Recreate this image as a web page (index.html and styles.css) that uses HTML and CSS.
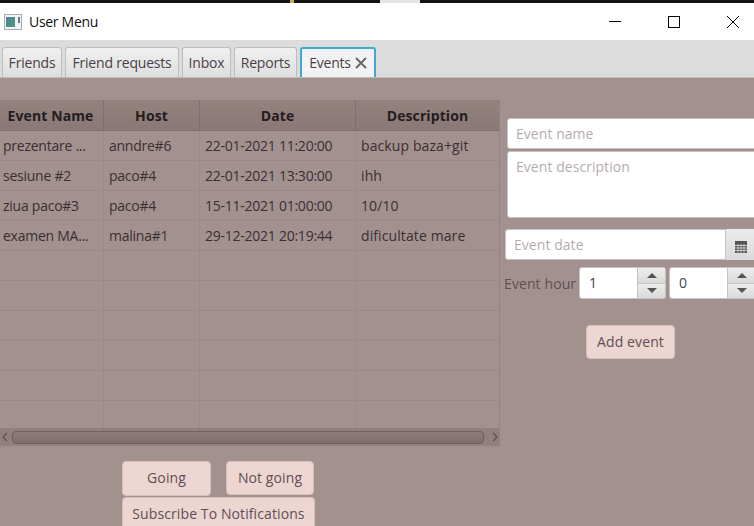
FILE: index.html
```html
<!DOCTYPE html>
<html lang="en">
<head>
    <meta charset="UTF-8">
    <title>User Menu</title>
    <link rel="stylesheet" href="styles.css">
</head>
<body>
    <div class="desktop-strip">
        <span class="strip-gold"></span>
        <span class="strip-light"></span>
    </div>
    <div class="window">
        <div class="titlebar">
            <svg class="app-icon" width="18" height="16" viewBox="0 0 18 16">
                <defs>
                    <linearGradient id="appFill" x1="0" y1="0" x2="1" y2="1">
                        <stop offset="0" stop-color="#4d7fa8"/>
                        <stop offset="1" stop-color="#4f9a6e"/>
                    </linearGradient>
                </defs>
                <rect x="0.5" y="0.5" width="17" height="15" fill="#f2f4f4" stroke="#a9adb0"/>
                <rect x="2" y="3" width="9" height="10" fill="url(#appFill)"/>
                <rect x="14" y="3" width="2" height="6" fill="#5f7f92"/>
            </svg>
            <span class="title">User Menu</span>
            <div class="win-buttons">
                <svg width="14" height="14" viewBox="0 0 14 14"><path d="M1 6.5H13" stroke="#000" fill="none"/></svg>
                <svg width="14" height="14" viewBox="0 0 14 14"><rect x="1.5" y="1.5" width="11" height="11" stroke="#000" fill="none"/></svg>
                <svg width="14" height="14" viewBox="0 0 14 14"><path d="M1 1L13 13M13 1L1 13" stroke="#000" fill="none"/></svg>
            </div>
        </div>

        <div class="tabbar">
            <div class="tab tab-friends">Friends</div>
            <div class="tab tab-requests">Friend requests</div>
            <div class="tab tab-inbox">Inbox</div>
            <div class="tab tab-reports">Reports</div>
            <div class="tab tab-active">Events
                <svg width="12" height="12" viewBox="0 0 12 12"><path d="M1 1L11 11M11 1L1 11" stroke="#666" stroke-width="1.8" fill="none"/></svg>
            </div>
        </div>

        <div class="content">
            <div class="left">
                <div class="table">
                    <div class="row head">
                        <div class="cell c1">Event Name</div>
                        <div class="cell c2">Host</div>
                        <div class="cell c3">Date</div>
                        <div class="cell c4">Description</div>
                    </div>
                    <div class="row">
                        <div class="cell c1">prezentare ...</div>
                        <div class="cell c2">anndre#6</div>
                        <div class="cell c3">22-01-2021 11:20:00</div>
                        <div class="cell c4">backup baza+git</div>
                    </div>
                    <div class="row">
                        <div class="cell c1">sesiune #2</div>
                        <div class="cell c2">paco#4</div>
                        <div class="cell c3">22-01-2021 13:30:00</div>
                        <div class="cell c4">ihh</div>
                    </div>
                    <div class="row">
                        <div class="cell c1">ziua paco#3</div>
                        <div class="cell c2">paco#4</div>
                        <div class="cell c3">15-11-2021 01:00:00</div>
                        <div class="cell c4">10/10</div>
                    </div>
                    <div class="row">
                        <div class="cell c1">examen MA...</div>
                        <div class="cell c2">malina#1</div>
                        <div class="cell c3">29-12-2021 20:19:44</div>
                        <div class="cell c4">dificultate mare</div>
                    </div>
                    <div class="row"><div class="cell c1"></div><div class="cell c2"></div><div class="cell c3"></div><div class="cell c4"></div></div>
                    <div class="row"><div class="cell c1"></div><div class="cell c2"></div><div class="cell c3"></div><div class="cell c4"></div></div>
                    <div class="row"><div class="cell c1"></div><div class="cell c2"></div><div class="cell c3"></div><div class="cell c4"></div></div>
                    <div class="row"><div class="cell c1"></div><div class="cell c2"></div><div class="cell c3"></div><div class="cell c4"></div></div>
                    <div class="row"><div class="cell c1"></div><div class="cell c2"></div><div class="cell c3"></div><div class="cell c4"></div></div>
                    <div class="row row-last"><div class="cell c1"></div><div class="cell c2"></div><div class="cell c3"></div><div class="cell c4"></div></div>
                    <div class="scrollbar">
                        <svg width="8" height="10" viewBox="0 0 8 10"><path d="M6 1L2 5L6 9" stroke="#5d5050" stroke-width="1.2" fill="none"/></svg>
                        <div class="thumb"></div>
                        <svg width="8" height="10" viewBox="0 0 8 10"><path d="M2 1L6 5L2 9" stroke="#5d5050" stroke-width="1.2" fill="none"/></svg>
                    </div>
                </div>
                <div class="actions">
                    <div class="actions-top">
                        <div class="btn btn-going">Going</div>
                        <div class="btn btn-notgoing">Not going</div>
                    </div>
                    <div class="btn btn-subscribe">Subscribe To Notifications</div>
                </div>
            </div>

            <div class="form">
                <div class="field field-name">Event name</div>
                <div class="field field-desc">Event description</div>
                <div class="date">
                    <div class="field field-date">Event date</div>
                    <div class="date-btn">
                        <svg width="12" height="12" viewBox="0 0 12 12">
                            <rect width="12" height="12" fill="#555"/>
                            <path d="M0 4.5H12M0 7H12M0 9.5H12M3 3V12M6 3V12M9 3V12" stroke="#ddd" stroke-width="0.8" fill="none"/>
                        </svg>
                    </div>
                </div>
                <div class="hour">
                    <span class="hour-label">Event hour</span>
                    <div class="spinner">
                        <div class="spin-val">1</div>
                        <div class="spin-btns">
                            <div class="spin-btn"><span class="arrow-up"></span></div>
                            <div class="spin-btn"><span class="arrow-down"></span></div>
                        </div>
                    </div>
                    <div class="spinner">
                        <div class="spin-val">0</div>
                        <div class="spin-btns">
                            <div class="spin-btn"><span class="arrow-up"></span></div>
                            <div class="spin-btn"><span class="arrow-down"></span></div>
                        </div>
                    </div>
                </div>
                <div class="btn btn-add">Add event</div>
            </div>
        </div>
    </div>
</body>
</html>
```

FILE: styles.css
```css
html, body {
    margin: 0;
    height: 100%;
    overflow: hidden;
}
body {
    font-family: "Open Sans", "Noto Sans", sans-serif;
    font-size: 14px;
    background: #111;
}
.desktop-strip {
    height: 3px;
    display: flex;
}
.strip-gold {
    width: 4px;
    margin-left: 290px;
    background: #c9a94f;
}
.strip-light {
    width: 40px;
    margin-left: 86px;
    background: #e4e4e4;
}
.window {
    height: 523px;
    display: flex;
    flex-direction: column;
    overflow: hidden;
}

.titlebar {
    height: 37px;
    flex: none;
    background: #fff;
    display: flex;
    align-items: center;
    padding-left: 4px;
    color: #111;
}
.app-icon {
    margin-right: 7px;
}
.title {
    letter-spacing: -0.3px;
}
.win-buttons {
    margin-left: auto;
    display: flex;
    gap: 45px;
    padding-right: 14px;
}

.tabbar {
    height: 38px;
    flex: none;
    box-sizing: border-box;
    background: #dcdcdc;
    border-bottom: 1px solid #c4bcbc;
    padding: 7px 0 0 2px;
    display: flex;
    gap: 3px;
}
.tab {
    box-sizing: border-box;
    height: 30px;
    padding-bottom: 1px;
    border: 1px solid #bdbdbd;
    border-bottom: none;
    border-radius: 3px 3px 0 0;
    background: linear-gradient(#f0f0f0, #dedede);
    color: #4a3f48;
    display: flex;
    align-items: center;
    justify-content: center;
    gap: 4px;
    letter-spacing: -0.2px;
}
.tab-friends { width: 60px; }
.tab-requests { width: 114px; }
.tab-inbox { width: 49px; }
.tab-reports { width: 63px; }
.tab-active {
    width: 76px;
    background: #f2f2f2;
    border: 2px solid #3fa9d5;
    border-bottom: none;
}

.content {
    flex: 1;
    display: flex;
    background: #a39190;
    overflow: hidden;
}
.left {
    width: 500px;
    flex: none;
    padding-top: 22px;
}

.table {
    box-sizing: border-box;
    width: 500px;
    border-right: 1px solid #938281;
    color: #3a2f30;
}
.row {
    display: flex;
    height: 30px;
    box-sizing: border-box;
    border-bottom: 1px solid #9a8988;
}
.row-last {
    height: 27px;
    border-bottom: none;
}
.row.head {
    height: 31px;
    background: linear-gradient(#94827f, #8a7876);
    border-bottom: 1px solid #7f6f6e;
    font-weight: 700;
    color: #241d1d;
}
.cell {
    box-sizing: border-box;
    padding: 0 5px 0 4px;
    border-right: 1px solid #9a8988;
    line-height: 30px;
    white-space: nowrap;
    overflow: hidden;
    letter-spacing: -0.25px;
}
.head .cell {
    text-align: center;
    border-right-color: #7f6f6e;
    letter-spacing: 0.1px;
    line-height: 32px;
}
.c1 { width: 104px; padding-left: 3px; }
.c2 { width: 96px; padding-left: 5px; }
.c3 { width: 156px; padding-left: 5px; }
.c4 { width: 143px; padding-left: 5px; border-right: none; letter-spacing: 0.1px; }

.scrollbar {
    height: 18px;
    background: #937f7e;
    display: flex;
    align-items: center;
    padding: 0 0 0 1px;
}
.thumb {
    flex: 1;
    height: 11px;
    margin: 0 7px 0 3px;
    border: 1px solid #6f5f5f;
    border-radius: 4px;
    background: linear-gradient(#8d7c7b, #7e6e6d);
}

.actions {
    margin: 15px 0 0 122px;
    display: flex;
    flex-direction: column;
    gap: 1px;
}
.actions-top {
    display: flex;
    gap: 15px;
    align-items: flex-start;
}
.btn {
    box-sizing: border-box;
    padding-bottom: 2px;
    background: #edd5d1;
    border: 1px solid #d9bfbc;
    border-radius: 4px;
    color: #5f4f55;
    display: flex;
    align-items: center;
    justify-content: center;
    letter-spacing: 0.1px;
}
.btn-going { width: 89px; height: 35px; }
.btn-notgoing { width: 88px; height: 34px; }
.btn-subscribe { width: 193px; height: 35px; }
.btn-add {
    width: 89px;
    height: 34px;
    margin: 26px 0 0 81px;
}

.form {
    flex: none;
    width: 260px;
    padding: 40px 0 0 5px;
    display: flex;
    flex-direction: column;
    align-items: flex-start;
}
.field {
    box-sizing: border-box;
    background: #fff;
    border: 1px solid #c9c0c0;
    border-radius: 3px;
    color: #b5adad;
    padding: 0 8px;
    letter-spacing: 0.05px;
}
.field-name {
    width: 260px;
    height: 31px;
    margin-left: 2px;
    line-height: 29px;
}
.field-desc {
    width: 260px;
    height: 67px;
    margin: 2px 0 0 2px;
    padding-top: 5px;
}
.date {
    display: flex;
    margin-top: 11px;
}
.field-date {
    width: 221px;
    height: 31px;
    line-height: 29px;
    border-radius: 3px 0 0 3px;
}
.date-btn {
    width: 40px;
    height: 31px;
    box-sizing: border-box;
    background: linear-gradient(#ececec, #dadada);
    padding: 9px 0 0 9px;
}
.hour {
    display: flex;
    align-items: center;
    margin: 7px 0 0 -1px;
}
.hour-label {
    width: 75px;
    color: #5f4f50;
    letter-spacing: 0.1px;
}
.spinner {
    display: flex;
    flex: none;
    width: 87px;
    height: 32px;
    margin-right: 3px;
    box-sizing: border-box;
    border: 1px solid #c9c0c0;
    border-radius: 3px;
    background: #fff;
}
.spin-val {
    width: 57px;
    line-height: 29px;
    padding-left: 9px;
    box-sizing: border-box;
    color: #3a4650;
}
.spin-btns {
    flex: 1;
    display: flex;
    flex-direction: column;
    gap: 1px;
    background: #c9c0c0;
    padding-left: 1px;
}
.spin-btn {
    flex: 1;
    background: linear-gradient(#ececec, #dadada);
    display: flex;
    align-items: center;
    justify-content: center;
}
.arrow-up {
    border: 5px solid transparent;
    border-top: none;
    border-bottom: 5px solid #555;
}
.arrow-down {
    border: 5px solid transparent;
    border-bottom: none;
    border-top: 5px solid #555;
}
```
